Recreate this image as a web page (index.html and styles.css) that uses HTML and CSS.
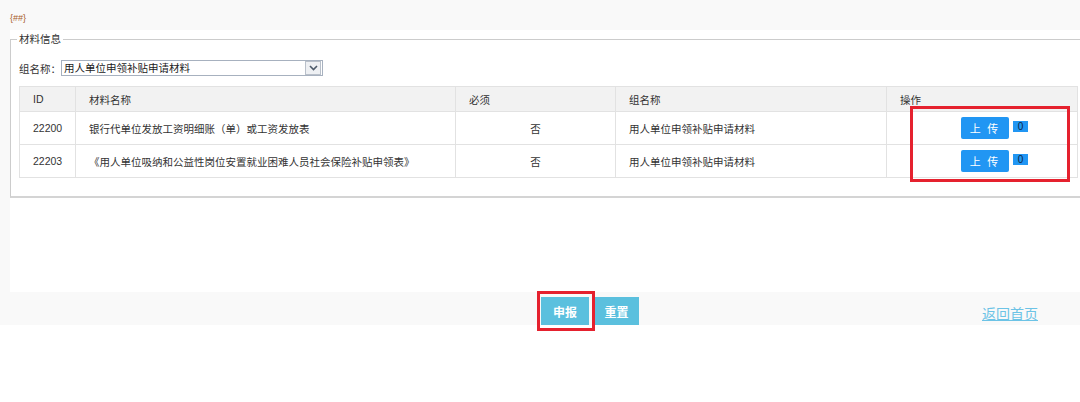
FILE: index.html
```html
<!DOCTYPE html>
<html lang="zh-CN">
<head>
  <meta charset="UTF-8" />
  <meta name="viewport" content="width=device-width, initial-scale=1.0" />
  <link rel="stylesheet" href="styles.css">
</head>
<body>
  <div class="page">
    <div class="tag">{##}</div>

    <div class="panel">
      <fieldset class="box">
        <legend>材料信息</legend>

        <div class="group-row">
          <span class="group-label">组名称：</span>
          <div class="fake-select">
            <span class="fake-select-text">用人单位申领补贴申请材料</span>
            <span class="fake-select-arrow">
              <svg width="9" height="6" viewBox="0 0 9 6"><path d="M1 1 L4.5 4.5 L8 1" fill="none" stroke="#4d5a6a" stroke-width="1.6"/></svg>
            </span>
          </div>
        </div>

        <table class="grid">
          <thead>
            <tr>
              <th class="col-id">ID</th>
              <th class="col-name">材料名称</th>
              <th class="col-must">必须</th>
              <th class="col-group">组名称</th>
              <th class="col-op">操作</th>
            </tr>
          </thead>
          <tbody>
            <tr>
              <td>22200</td>
              <td>银行代单位发放工资明细账（单）或工资发放表</td>
              <td class="center">否</td>
              <td>用人单位申领补贴申请材料</td>
              <td class="op"><button class="upload-btn">上 传</button><span class="count">0</span></td>
            </tr>
            <tr>
              <td>22203</td>
              <td>《用人单位吸纳和公益性岗位安置就业困难人员社会保险补贴申领表》</td>
              <td class="center">否</td>
              <td>用人单位申领补贴申请材料</td>
              <td class="op"><button class="upload-btn">上 传</button><span class="count">0</span></td>
            </tr>
          </tbody>
        </table>
      </fieldset>
    </div>

    <div class="actions">
      <button class="btn-main">申报</button>
      <button class="btn-main btn-reset">重置</button>
      <a class="home-link" href="#">返回首页</a>
    </div>
  </div>

  <div class="mark mark-upload"></div>
  <div class="mark mark-submit"></div>
</body>
</html>
```

FILE: styles.css
```css
html, body {
  margin: 0;
  padding: 0;
  background-color: #ffffff;
  font-family: "Liberation Sans", "Noto Sans CJK SC", sans-serif;
  color: #333333;
}

.page {
  background-color: #f9f9f9;
  height: 325px;
  overflow: hidden;
}

.tag {
  height: 30px;
  box-sizing: border-box;
  padding: 13px 0 0 10px;
  font-size: 9px;
  line-height: 11px;
  color: #a8602a;
}

.panel {
  margin-left: 10px;
  width: 1110px;
  height: 262px;
  box-sizing: border-box;
  padding-top: 3px;
  background-color: #ffffff;
}

.box {
  margin: 0;
  width: 1085px;
  box-sizing: border-box;
  padding: 0 8px 18px 8px;
  border: 1px solid #cccccc;
  border-bottom: 2px solid #d4d4d4;
}

.box legend {
  padding: 0 2px;
  margin-left: -2px;
  font-size: 10.5px;
  line-height: 13px;
  color: #333333;
}

.group-row {
  display: flex;
  align-items: center;
  margin-top: 14px;
  height: 16px;
}

.group-label {
  font-size: 10.5px;
  width: 42px;
}

.fake-select {
  display: flex;
  align-items: center;
  width: 262px;
  height: 16px;
  box-sizing: border-box;
  border: 1px solid #a7b1bf;
  background-color: #ffffff;
}

.fake-select-text {
  flex: 1;
  padding-left: 2px;
  font-size: 10.5px;
  line-height: 14px;
  color: #222222;
}

.fake-select-arrow {
  display: flex;
  align-items: center;
  justify-content: center;
  width: 14px;
  height: 12px;
  margin-right: 1px;
  border: 1px solid #b9c0ca;
  background-color: #eef0f3;
}

.grid {
  margin-top: 10px;
  width: 1059px;
  border-collapse: collapse;
  border: 1px solid #dddddd;
  font-size: 10.5px;
}

.grid th {
  height: 24px;
  padding: 0 0 0 13px;
  text-align: left;
  font-weight: normal;
  background-color: #f2f2f2;
  border: 1px solid #e2e2e2;
}

.grid td {
  height: 32px;
  padding: 0 0 0 13px;
  border: 1px solid #e2e2e2;
}

.col-id { width: 42px; }
.col-name { width: 366px; }
.col-must { width: 146px; }
.col-group { width: 257px; }

.grid td.center {
  text-align: center;
  padding-left: 0;
}

.grid td.op {
  padding-left: 74px;
}

.upload-btn {
  width: 48px;
  height: 22px;
  padding: 0;
  border: none;
  border-radius: 2px;
  background-color: #2196f3;
  color: #ffffff;
  font-family: "Noto Sans CJK SC", sans-serif;
  font-size: 11px;
  letter-spacing: 2px;
  vertical-align: top;
}

.count {
  display: inline-block;
  vertical-align: top;
  margin: 4px 0 0 4px;
  width: 15px;
  height: 11px;
  line-height: 11px;
  text-align: center;
  background-color: #2196f3;
  color: #0b2545;
  font-size: 10px;
}

.actions {
  display: flex;
  align-items: flex-end;
  height: 33px;
  padding-left: 541px;
}

.btn-main {
  height: 28px;
  width: 48px;
  padding: 0;
  border: none;
  background-color: #5bc0de;
  color: #ffffff;
  font-family: "Noto Sans CJK SC", sans-serif;
  font-size: 12px;
  font-weight: bold;
}

.btn-reset {
  width: 45px;
  margin-left: 5px;
}

.home-link {
  margin-left: auto;
  margin-right: 42px;
  margin-bottom: 3px;
  font-family: "Noto Sans CJK SC", sans-serif;
  font-size: 14px;
  line-height: 18px;
  color: #6cc3e6;
}

.mark {
  position: absolute;
  box-sizing: border-box;
  border: 3px solid #e5212e;
}

.mark-upload {
  left: 910px;
  top: 106px;
  width: 160px;
  height: 76px;
}

.mark-submit {
  left: 537px;
  top: 291px;
  width: 58px;
  height: 40px;
}
```
